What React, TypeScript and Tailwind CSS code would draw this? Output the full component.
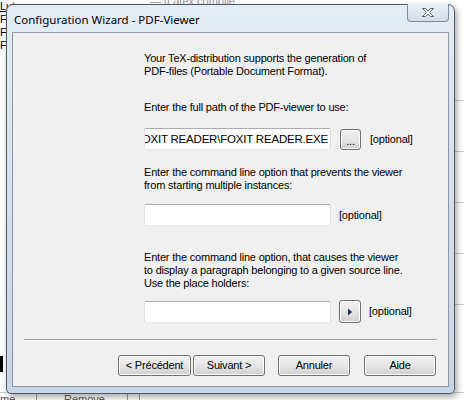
import React from "react";

const body = { fontFamily: '"Liberation Sans", Arial, sans-serif' };

function TextBox({ value }: { value?: string }) {
  return (
    <div className="w-[187px] h-[22px] bg-white border border-[#abadb3] border-l-[#e2e3ea] border-r-[#dbdfe6] border-b-[#e3e9ef] rounded-[2px] flex items-center justify-end overflow-hidden whitespace-nowrap pr-[2px] text-[11.5px] tracking-[-0.2px] text-black">
      {value}
    </div>
  );
}

function WinButton({ children, className }: { children: React.ReactNode; className?: string }) {
  return (
    <div
      className={
        "h-[21px] border border-[#707070] rounded-[3px] bg-gradient-to-b from-[#f2f2f2] via-[#e6e6e6] to-[#cfcfcf] flex items-center justify-center text-[11px] text-black shadow-[inset_0_0_0_1px_#fcfcfc] " +
        (className || "")
      }
    >
      {children}
    </div>
  );
}

function CloseGlyph() {
  return (
    <svg width="14" height="11" viewBox="0 0 14 11">
      <path
        d="M1.5 1.5 L4.5 1.5 L7 4 L9.5 1.5 L12.5 1.5 L8.5 5.5 L12.5 9.5 L9.5 9.5 L7 7 L4.5 9.5 L1.5 9.5 L5.5 5.5 Z"
        fill="#ffffff"
        stroke="#55606e"
        strokeWidth="1"
        strokeLinejoin="round"
      />
    </svg>
  );
}

export default function App() {
  return (
    <div className="relative w-[464px] h-[400px] overflow-hidden bg-white" style={body}>
      {/* application behind the dialog */}
      <div className="absolute left-0 top-0 text-[11px] leading-[13px] text-black">
        <div className="underline">Lut</div>
        <div>F</div>
        <div>F</div>
        <div>F</div>
      </div>
      <div className="absolute left-[150px] top-[-7px] text-[11px] text-[#9a9a9a]">
        — [Latex compile
      </div>
      <div className="absolute left-[0px] top-[356px] w-[3px] h-[16px] bg-black" />
      <div className="absolute left-0 top-[392px] w-[464px] h-[8px] border-t border-[#c8c8c8] text-[11px] leading-[10px] text-[#555]">
        <span className="absolute left-0 top-[1px]">me</span>
        <span className="absolute left-[36px] top-0 h-[8px] border-l border-[#999]" />
        <span className="absolute left-[64px] top-[1px]">Remove</span>
        <span className="absolute left-[127px] top-0 h-[8px] border-l border-[#999]" />
        <span className="absolute left-[139px] top-0 h-[8px] border-l border-[#999]" />
      </div>
      <div className="absolute right-0 top-[100px] w-[10px] flex flex-col gap-[50px]">
        <div className="border-t border-[#c8c8c8]" />
        <div className="border-t border-[#c8c8c8]" />
        <div className="border-t border-[#c8c8c8]" />
        <div className="border-t border-[#c8c8c8]" />
        <div className="border-t border-[#c8c8c8]" />
      </div>

      {/* dialog window */}
      <div className="absolute left-[6px] top-[4px] w-[449px] h-[390px] rounded-t-[7px] rounded-b-[5px] border border-[#4d5b6c] bg-gradient-to-b from-[#e4ecf5] via-[#d4e0ec] to-[#c7d5e5] shadow-[2px_3px_6px_rgba(0,0,0,0.35)] flex flex-col px-[5px] pb-[6px]">
        <div className="relative h-[27px] flex items-center pl-[2px]">
          <span
            className="text-[11.5px] text-black mt-[2px]"
            style={{ fontFamily: '"Noto Sans", "Open Sans", sans-serif' }}
          >
            Configuration Wizard - PDF-Viewer
          </span>
          <div className="absolute right-[0px] top-[-1px] w-[42px] h-[18px] rounded-b-[4px] border border-t-0 border-[#7d8a9a] bg-gradient-to-b from-[#e9eff6] to-[#d3dde9] flex items-center justify-center">
            <CloseGlyph />
          </div>
        </div>

        <div className="flex-1 border border-[#8b97a6] bg-[#f0f0f0] flex flex-col text-[11px] leading-[13px] tracking-[-0.2px] text-black">
          <div className="pl-[131px] pt-[19px] flex flex-col">
            <p>Your TeX-distribution supports the generation of</p>
            <p>PDF-files (Portable Document Format).</p>

            <p className="mt-[23px]">Enter the full path of the PDF-viewer to use:</p>
            <div className="mt-[14px] flex items-center">
              <TextBox value="C:\PROGRAM FILES\FOXIT SOFTWARE\FOXIT READER\FOXIT READER.EXE" />
              <WinButton className="ml-[9px] w-[21px] h-[21px] items-end pb-[3px] text-[10px] leading-[10px]">...</WinButton>
              <span className="ml-[9px]">[optional]</span>
            </div>

            <p className="mt-[16px]">Enter the command line option that prevents the viewer</p>
            <p>from starting multiple instances:</p>
            <div className="mt-[12px] flex items-center">
              <TextBox />
              <span className="ml-[8px]">[optional]</span>
            </div>

            <p className="mt-[25px]">Enter the command line option, that causes the viewer</p>
            <p>to display a paragraph belonging to a given source line.</p>
            <p>Use the place holders:</p>
            <div className="mt-[10px] flex items-center">
              <TextBox />
              <WinButton className="ml-[8px] w-[22px] h-[23px]">
                <svg width="6" height="8" viewBox="0 0 6 8">
                  <path d="M1 0.5 L5 4 L1 7.5 Z" fill="#1c2a5a" />
                </svg>
              </WinButton>
              <span className="ml-[8px]">[optional]</span>
            </div>
          </div>

          <div className="mx-[11px] mt-[16px] border-t border-[#a0a0a0] border-b border-b-white" />

          <div className="flex justify-end pr-[12px] mt-[14px]">
            <WinButton className="w-[73px]">&lt; Précédent</WinButton>
            <WinButton className="w-[72px] ml-[2px]">Suivant &gt;</WinButton>
            <WinButton className="w-[72px] ml-[13px]">Annuler</WinButton>
            <WinButton className="w-[72px] ml-[14px]">Aide</WinButton>
          </div>
        </div>
      </div>
    </div>
  );
}
